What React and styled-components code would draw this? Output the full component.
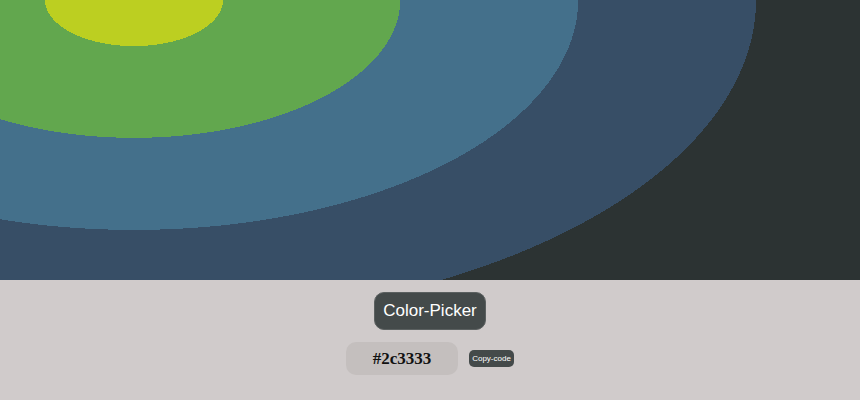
import React, { useState } from 'react';
import styled, { createGlobalStyle } from 'styled-components';

const GlobalStyle = createGlobalStyle`
  html, body {
    margin: 0;
    padding: 0;
    background: #d0cbcb;
    font-family: "Liberation Sans", Arial, sans-serif;
  }
`;

const App = () => {
  const [color] = useState('#2c3333');

  const handleCopy = () => {
    if (navigator.clipboard) navigator.clipboard.writeText(color).catch(() => {});
  };

  return (
    <Page>
      <GlobalStyle />
      <Swatch $base={color} />
      <Controls>
        <Title>Color-Picker</Title>
        <CodeRow>
          <CodeBox>{color}</CodeBox>
          <CopyButton onClick={handleCopy}>Copy-code</CopyButton>
        </CodeRow>
      </Controls>
    </Page>
  );
};

export default App;

const Page = styled.div`
  width: 860px;
  height: 400px;
  display: flex;
  flex-direction: column;
  background: #d0cbcb;
`;

const Swatch = styled.div`
  height: 280px;
  flex-shrink: 0;
  background: radial-gradient(
    ellipse 622px 322px at 134px 0,
    #bccf21 0 14.3%,
    #62a74e 14.3% 42.8%,
    #44708b 42.8% 71.4%,
    #374e66 71.4% 100%,
    ${(p) => p.$base} 100%
  );
`;

const Controls = styled.div`
  display: flex;
  flex-direction: column;
  align-items: center;
  padding-top: 12px;
  gap: 12px;
`;

const Title = styled.div`
  width: 112px;
  height: 38px;
  box-sizing: border-box;
  display: flex;
  align-items: center;
  justify-content: center;
  background: #444a4a;
  border: 1px solid #5b6060;
  border-radius: 10px;
  color: #fff;
  font-size: 17px;
`;

const CodeRow = styled.div`
  display: flex;
  align-items: center;
  gap: 11px;
`;

const CodeBox = styled.div`
  width: 112px;
  height: 33px;
  display: flex;
  align-items: center;
  justify-content: center;
  background: #c4bfbe;
  border-radius: 10px;
  font-family: "Liberation Serif", "Times New Roman", serif;
  font-weight: bold;
  font-size: 17px;
  color: #111;
`;

const CopyButton = styled.button`
  width: 45px;
  height: 17px;
  padding: 0;
  border: none;
  border-radius: 5px;
  background: #444a4a;
  color: #fff;
  font-family: "Liberation Sans", Arial, sans-serif;
  font-size: 8px;
  cursor: pointer;
`;
